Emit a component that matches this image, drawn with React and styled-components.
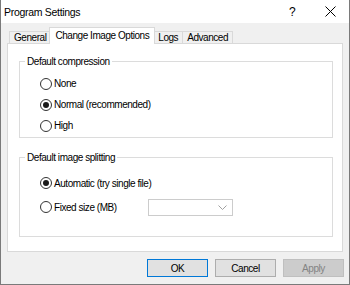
import React from 'react';
import styled, { createGlobalStyle } from 'styled-components';

const GlobalStyle = createGlobalStyle`
  html, body {
    margin: 0;
    padding: 0;
    background: #f0f0f0;
  }
  body {
    font-family: "Liberation Sans", Arial, sans-serif;
    font-size: 10px;
    letter-spacing: -0.45px;
    color: #000;
  }
`;

const Window = styled.div`
  box-sizing: border-box;
  width: 350px;
  height: 285px;
  display: flex;
  flex-direction: column;
  background: #f0f0f0;
  border: 1px solid #7a7a7a;
  border-top: none;
`;

const TitleBar = styled.div`
  height: 23px;
  flex: none;
  display: flex;
  align-items: center;
  background: #fff;
  padding-left: 3px;
`;

const Title = styled.div`
  flex: 1;
  font-size: 10.5px;
  letter-spacing: -0.3px;
`;

const TitleButton = styled.div`
  width: 38px;
  height: 23px;
  display: flex;
  align-items: center;
  justify-content: center;
  font-size: 12px;
`;

const Body = styled.div`
  flex: 1;
  display: flex;
  flex-direction: column;
  padding: 5px 6px 0 6px;
`;

const TabStrip = styled.div`
  display: flex;
  align-items: flex-end;
  padding-left: 2px;
  height: 16px;
  position: relative;
  z-index: 1;
  margin-bottom: -1px;
`;

const Tab = styled.div`
  box-sizing: border-box;
  height: ${(p) => (p.$active ? '17px' : '13px')};
  padding: ${(p) => (p.$active ? '0 5px 1px' : '0 4px')};
  margin: ${(p) => (p.$active ? '0 -2px' : '0')};
  border: 1px solid #d9d9d9;
  border-bottom: ${(p) => (p.$active ? 'none' : '1px solid #d9d9d9')};
  border-left: ${(p) => (p.$hideLeft ? 'none' : '1px solid #d9d9d9')};
  background: ${(p) => (p.$active ? '#fff' : '#f0f0f0')};
  position: relative;
  z-index: ${(p) => (p.$active ? 2 : 1)};
  display: flex;
  align-items: center;
  white-space: nowrap;
`;

const Panel = styled.div`
  box-sizing: border-box;
  height: 209px;
  background: #fff;
  border: 1px solid #d9d9d9;
  padding: 11px 9px 0 11px;
  display: flex;
  flex-direction: column;
  gap: 13px;
`;

const Group = styled.fieldset`
  margin: 0;
  padding: 0;
  min-width: 0;
  height: ${(p) => p.$height}px;
  box-sizing: border-box;
  border: 1px solid #dcdcdc;
  display: flex;
  flex-direction: column;
`;

const Legend = styled.legend`
  padding: 0 2px;
  margin-left: 5px;
  line-height: 13px;
`;

const Options = styled.div`
  display: flex;
  flex-direction: column;
  padding: ${(p) => p.$top}px 0 0 20px;
`;

const RadioRow = styled.label`
  display: flex;
  align-items: center;
  height: ${(p) => p.$h}px;
`;

const RadioCircle = styled.span`
  box-sizing: border-box;
  width: 12px;
  height: 12px;
  border-radius: 50%;
  border: 1px solid #333;
  background: #fff;
  display: flex;
  align-items: center;
  justify-content: center;
  margin-right: 2px;
  flex: none;

  &::after {
    content: '';
    width: 6px;
    height: 6px;
    border-radius: 50%;
    background: #1a1a1a;
    display: ${(p) => (p.$checked ? 'block' : 'none')};
  }
`;

const Combo = styled.div`
  box-sizing: border-box;
  margin-left: auto;
  margin-right: 99px;
  width: 85px;
  height: 17px;
  border: 1px solid #cccccc;
  background: #fff;
  display: flex;
  align-items: center;
  justify-content: flex-end;
  padding-right: 5px;
`;

const ButtonRow = styled.div`
  display: flex;
  justify-content: flex-end;
  gap: 7px;
  padding-top: 7px;
  margin-right: -1px;
`;

const Button = styled.div`
  box-sizing: border-box;
  width: 61px;
  height: 18px;
  display: flex;
  align-items: center;
  justify-content: center;
  background: ${(p) => (p.$disabled ? '#cccccc' : '#e1e1e1')};
  border: 1px solid
    ${(p) => (p.$default ? '#0078d7' : p.$disabled ? '#bfbfbf' : '#adadad')};
  color: ${(p) => (p.$disabled ? '#838383' : '#000')};
`;

const Radio = ({ checked, children, h }) => (
  <RadioRow $h={h}>
    <RadioCircle $checked={checked} />
    {children}
  </RadioRow>
);

const App = () => {
  return (
    <>
      <GlobalStyle />
      <Window>
        <TitleBar>
          <Title>Program Settings</Title>
          <TitleButton>?</TitleButton>
          <TitleButton>
            <svg width="11" height="11" viewBox="0 0 11 11">
              <path d="M0.5 0.5 L10.5 10.5 M10.5 0.5 L0.5 10.5" stroke="#000" strokeWidth="1" />
            </svg>
          </TitleButton>
        </TitleBar>
        <Body>
          <TabStrip>
            <Tab>General</Tab>
            <Tab $active>Change Image Options</Tab>
            <Tab>Logs</Tab>
            <Tab $hideLeft>Advanced</Tab>
          </TabStrip>
          <Panel>
            <Group $height={83}>
              <Legend>Default compression</Legend>
              <Options $top={5}>
                <Radio h={21}>None</Radio>
                <Radio h={21} checked>Normal (recommended)</Radio>
                <Radio h={21}>High</Radio>
              </Options>
            </Group>
            <Group $height={86}>
              <Legend>Default image splitting</Legend>
              <Options $top={7}>
                <Radio h={24} checked>Automatic (try single file)</Radio>
                <RadioRow $h={24}>
                  <RadioCircle />
                  Fixed size (MB)
                  <Combo>
                    <svg width="9" height="5" viewBox="0 0 9 5">
                      <path d="M0.5 0.5 L4.5 4.5 L8.5 0.5" fill="none" stroke="#a0a0a0" />
                    </svg>
                  </Combo>
                </RadioRow>
              </Options>
            </Group>
          </Panel>
          <ButtonRow>
            <Button $default>OK</Button>
            <Button>Cancel</Button>
            <Button $disabled>Apply</Button>
          </ButtonRow>
        </Body>
      </Window>
    </>
  );
};

export default App;
